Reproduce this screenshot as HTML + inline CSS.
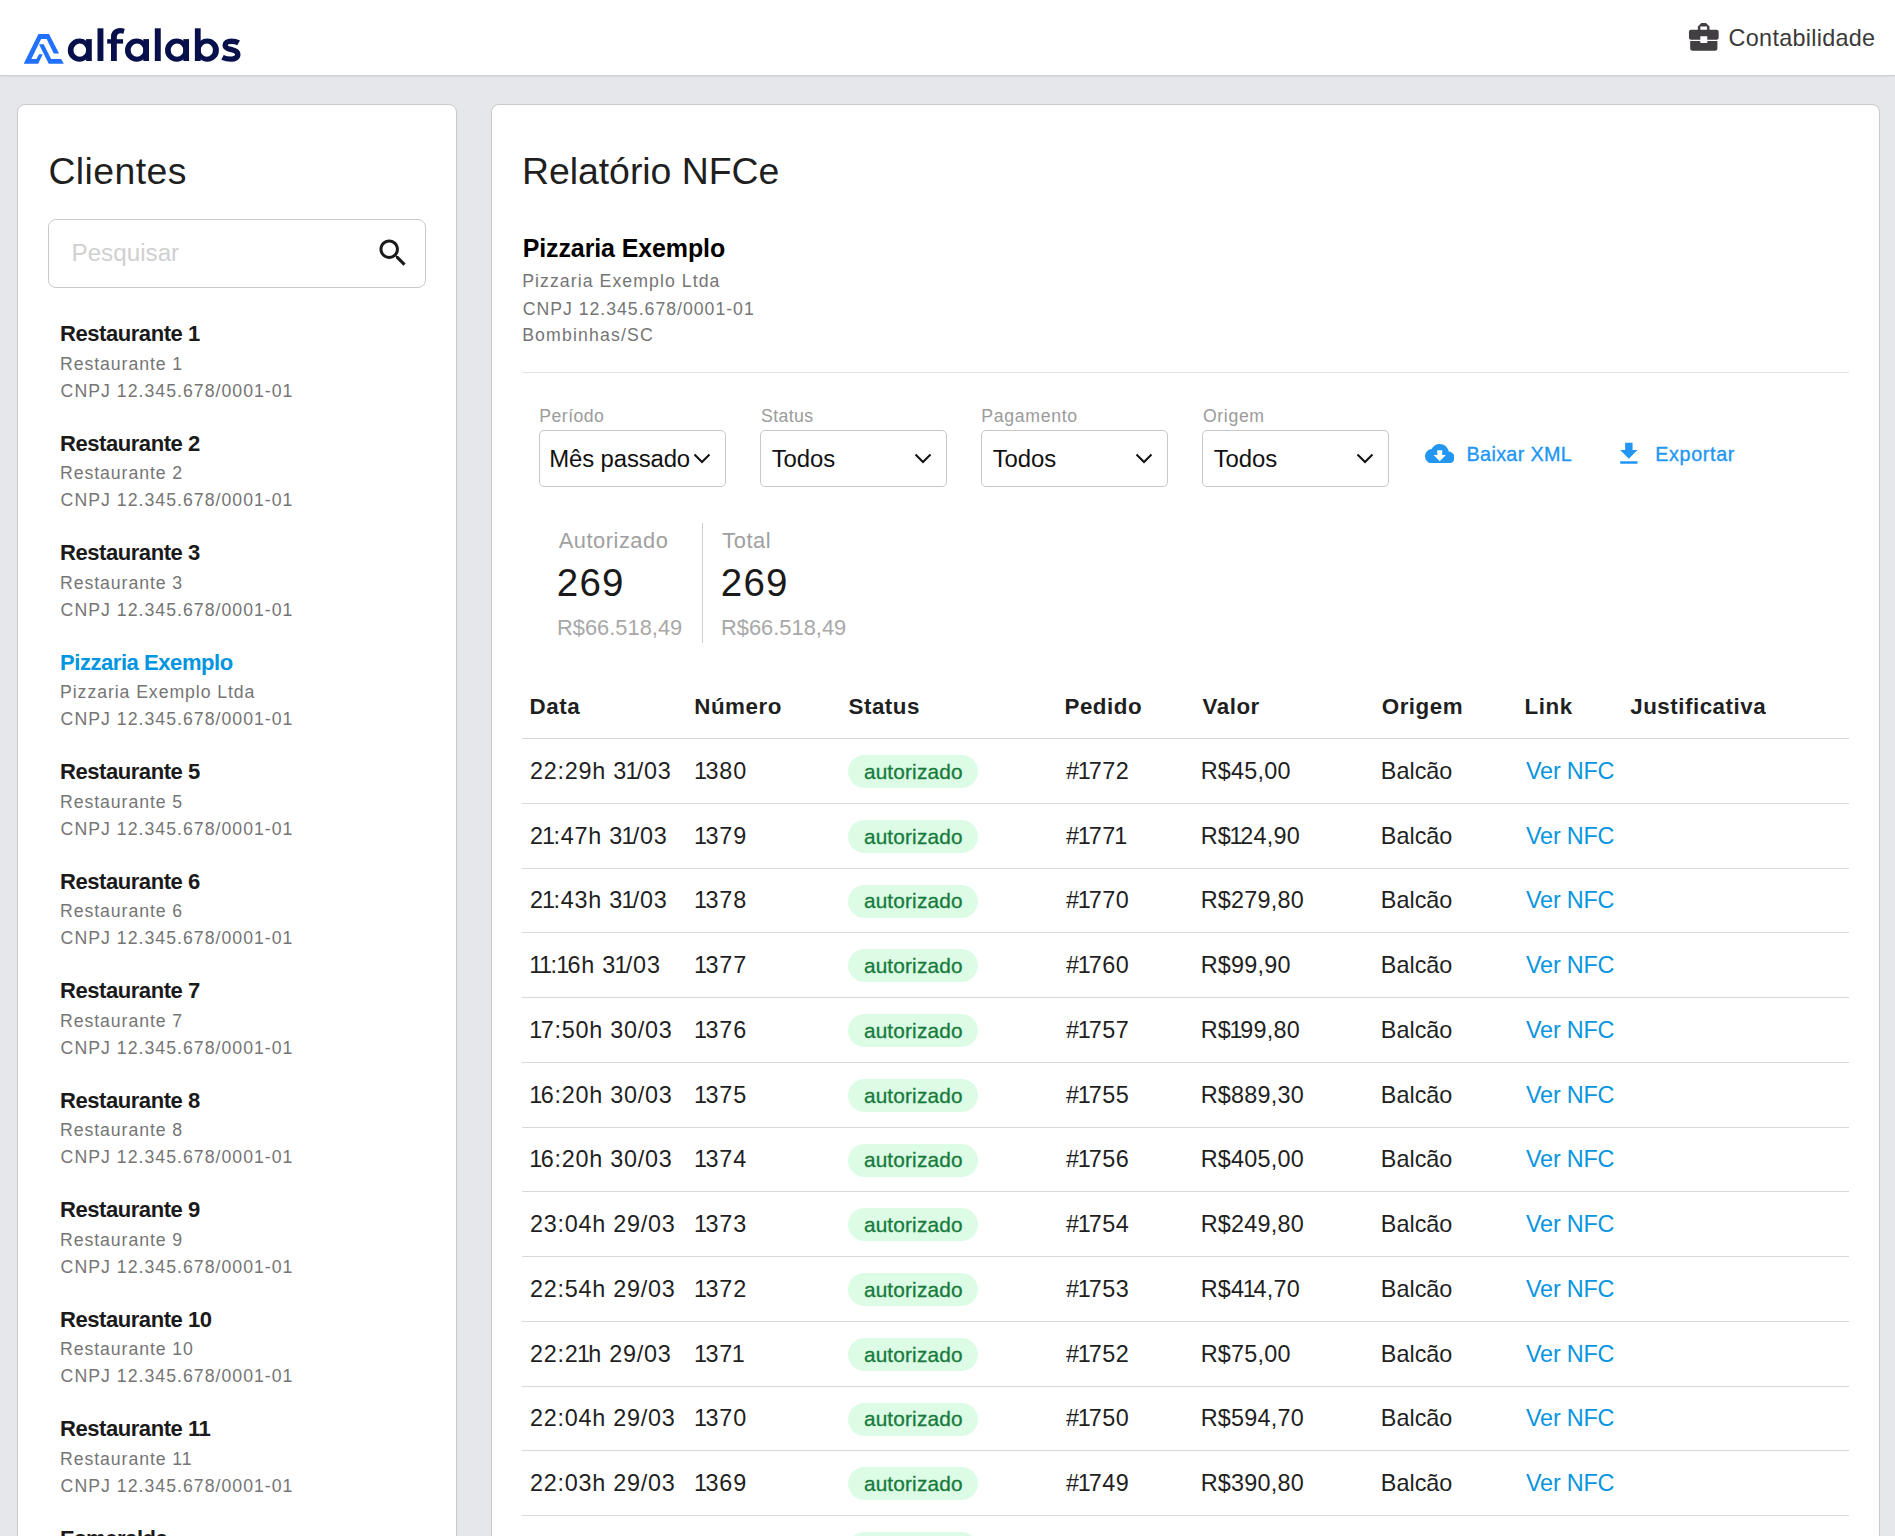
<!DOCTYPE html>
<html><head><meta charset="utf-8"><title>Relatório NFCe</title>
<style>
html,body{margin:0;padding:0;overflow:hidden;}
body{width:1895px;height:1536px;overflow:hidden;background:#e5e7eb;position:relative;font-family:"Liberation Sans", sans-serif;}
.t{position:absolute;white-space:nowrap;}
</style></head><body>
<div style="position:absolute;left:0;top:0;width:1895px;height:75px;background:#fff;border-bottom:1px solid #cdced2;box-shadow:0 1px 2px rgba(0,0,0,0.05)"></div>
<svg style="position:absolute;left:0;top:0" width="70" height="70" viewBox="0 0 70 70">
<path fill="#2170ff" d="M38.47 33.96 L49.02 33.96 L59.05 53.6 L53.77 53.6 L46.65 38.97 L41.1 38.97 L31.35 58.9 L36.36 58.9 L39.0 54.14 L42.69 54.14 L38.2 63.77 L23.7 63.77 Z"/>
<path fill="#2170ff" d="M39.0 44.25 L43.75 44.25 L51.13 58.9 L61.16 58.9 L63.8 63.77 L48.76 63.77 Z"/>
</svg>
<svg style="position:absolute;left:0;top:0" width="250" height="70" viewBox="0 0 250 70"><g fill="#07104a"><path fill-rule="evenodd" d="M67.80 50.15a11.6 11.6 0 1 0 23.20 0a11.6 11.6 0 1 0 -23.20 0ZM73.50 50.20a6.3 6.6 0 1 0 12.60 0a6.3 6.6 0 1 0 -12.60 0Z"/><rect x="86.10" y="39.1" width="5.7" height="21.9"/><path fill-rule="evenodd" d="M125.00 50.15a11.6 11.6 0 1 0 23.20 0a11.6 11.6 0 1 0 -23.20 0ZM130.70 50.20a6.3 6.6 0 1 0 12.60 0a6.3 6.6 0 1 0 -12.60 0Z"/><rect x="143.30" y="39.1" width="5.7" height="21.9"/><path fill-rule="evenodd" d="M165.04 50.15a11.6 11.6 0 1 0 23.20 0a11.6 11.6 0 1 0 -23.20 0ZM170.74 50.20a6.3 6.6 0 1 0 12.60 0a6.3 6.6 0 1 0 -12.60 0Z"/><rect x="183.34" y="39.1" width="5.7" height="21.9"/><rect x="97.5" y="28.3" width="5.9" height="32.7"/><rect x="154.8" y="28.3" width="5.95" height="32.7"/><path fill-rule="evenodd" d="M195.70 50.15a11.6 11.6 0 1 0 23.20 0a11.6 11.6 0 1 0 -23.20 0ZM200.70 50.20a6.1 6.6 0 1 0 12.20 0a6.1 6.6 0 1 0 -12.20 0Z"/><rect x="194.86" y="28.3" width="5.8" height="32.7"/><path d="M111.0 61.0V36.6C111.0 31.4 114.6 27.9 120.0 27.9C121.7 27.9 123.3 28.2 124.7 28.8L123.5 33.8C122.6 33.4 121.6 33.2 120.6 33.2C118.1 33.2 116.8 34.8 116.8 37.6V61.0Z"/><rect x="107.2" y="39.2" width="15.9" height="4.4"/><path fill="none" stroke="#07104a" stroke-width="5.4" d="M238.6 42.9C236.6 41.7 234.0 41.2 231.2 41.2C227.6 41.2 225.1 42.8 225.1 45.2C225.1 47.9 228.1 48.9 231.6 49.7C235.1 50.5 237.8 51.7 237.8 54.6C237.8 57.4 234.9 59.1 231.2 59.1C228.2 59.1 224.9 58.5 222.5 57.3"/></g></svg>
<svg style="position:absolute;left:1684px;top:18px" width="40" height="38" viewBox="0 0 40 38"><g fill="#423f42">
<path d="M13.86 11.9V8.42L17.33 4.95H22.03L25.5 8.42V11.9H23.02V8.42H16.34V11.9Z"/>
<path d="M4.95 13.63A2 2 0 0 1 6.95 11.63H32.65A2 2 0 0 1 34.65 13.63V19.78A2 2 0 0 1 32.65 21.78H23.27V18.3H16.34V21.78H6.95A2 2 0 0 1 4.95 19.78Z"/>
<path d="M6.19 22.99H16.34V25.0H23.27V22.99H33.42V30.17A2.5 2.5 0 0 1 30.92 32.67H8.69A2.5 2.5 0 0 1 6.19 30.17Z"/>
</g></svg>
<div class="t" id="e1" style="left:1728.61px;top:27.08px;font-size:23.4px;line-height:23.4px;color:#3a3a3a;font-weight:400;letter-spacing:0.288px;">Contabilidade</div>
<div style="position:absolute;left:17px;top:104px;width:438px;height:1500px;background:#fff;border:1px solid #cacaca;border-radius:8px"></div>
<div style="position:absolute;left:491px;top:104px;width:1387px;height:1500px;background:#fff;border:1px solid #cacaca;border-radius:8px"></div>
<div class="t" id="e2" style="left:48.40px;top:153.10px;font-size:37.44px;line-height:37.44px;color:#1f1f1f;font-weight:400;letter-spacing:0.402px;">Clientes</div>
<div style="position:absolute;left:48px;top:219px;width:376px;height:67px;border:1px solid #c9c9c9;border-radius:8px;background:#fff"></div>
<div class="t" id="e3" style="left:71.51px;top:241.28px;font-size:24.23px;line-height:24.23px;color:#d0d0d0;font-weight:400;letter-spacing:-0.004px;">Pesquisar</div>
<svg style="position:absolute;left:374.9px;top:235px" width="35.9" height="35.9" viewBox="0 0 24 24"><path fill="#1a1a1a" d="M15.5 14h-.79l-.28-.27C15.41 12.59 16 11.11 16 9.5 16 5.91 13.09 3 9.5 3S3 5.91 3 9.5 5.91 16 9.5 16c1.61 0 3.09-.59 4.23-1.57l.27.28v.79l5 4.99L20.49 19l-4.99-5zm-6 0C7.01 14 5 11.99 5 9.5S7.01 5 9.5 5 14 7.01 14 9.5 11.99 14 9.5 14z"/></svg>
<div class="t" id="e4" style="left:60.02px;top:323.13px;font-size:22.05px;line-height:22.05px;color:#1a1a1a;font-weight:700;letter-spacing:-0.463px;">Restaurante 1</div>
<div class="t" id="e5" style="left:60.05px;top:355.93px;font-size:17.68px;line-height:17.68px;color:#757575;font-weight:400;letter-spacing:0.927px;">Restaurante 1</div>
<div class="t" id="e6" style="left:60.60px;top:382.93px;font-size:17.68px;line-height:17.68px;color:#757575;font-weight:400;letter-spacing:1.026px;">CNPJ 12.345.678/0001-01</div>
<div class="t" id="e7" style="left:60.02px;top:432.63px;font-size:22.05px;line-height:22.05px;color:#1a1a1a;font-weight:700;letter-spacing:-0.463px;">Restaurante 2</div>
<div class="t" id="e8" style="left:60.05px;top:465.43px;font-size:17.68px;line-height:17.68px;color:#757575;font-weight:400;letter-spacing:0.927px;">Restaurante 2</div>
<div class="t" id="e9" style="left:60.60px;top:492.43px;font-size:17.68px;line-height:17.68px;color:#757575;font-weight:400;letter-spacing:1.026px;">CNPJ 12.345.678/0001-01</div>
<div class="t" id="e10" style="left:60.02px;top:542.13px;font-size:22.05px;line-height:22.05px;color:#1a1a1a;font-weight:700;letter-spacing:-0.463px;">Restaurante 3</div>
<div class="t" id="e11" style="left:60.05px;top:574.93px;font-size:17.68px;line-height:17.68px;color:#757575;font-weight:400;letter-spacing:0.927px;">Restaurante 3</div>
<div class="t" id="e12" style="left:60.60px;top:601.93px;font-size:17.68px;line-height:17.68px;color:#757575;font-weight:400;letter-spacing:1.026px;">CNPJ 12.345.678/0001-01</div>
<div class="t" id="e13" style="left:60.02px;top:651.63px;font-size:22.05px;line-height:22.05px;color:#0095e0;font-weight:700;letter-spacing:-0.463px;">Pizzaria Exemplo</div>
<div class="t" id="e14" style="left:60.05px;top:684.43px;font-size:17.68px;line-height:17.68px;color:#757575;font-weight:400;letter-spacing:0.927px;">Pizzaria Exemplo Ltda</div>
<div class="t" id="e15" style="left:60.60px;top:711.43px;font-size:17.68px;line-height:17.68px;color:#757575;font-weight:400;letter-spacing:1.026px;">CNPJ 12.345.678/0001-01</div>
<div class="t" id="e16" style="left:60.02px;top:761.13px;font-size:22.05px;line-height:22.05px;color:#1a1a1a;font-weight:700;letter-spacing:-0.463px;">Restaurante 5</div>
<div class="t" id="e17" style="left:60.05px;top:793.93px;font-size:17.68px;line-height:17.68px;color:#757575;font-weight:400;letter-spacing:0.927px;">Restaurante 5</div>
<div class="t" id="e18" style="left:60.60px;top:820.93px;font-size:17.68px;line-height:17.68px;color:#757575;font-weight:400;letter-spacing:1.026px;">CNPJ 12.345.678/0001-01</div>
<div class="t" id="e19" style="left:60.02px;top:870.63px;font-size:22.05px;line-height:22.05px;color:#1a1a1a;font-weight:700;letter-spacing:-0.463px;">Restaurante 6</div>
<div class="t" id="e20" style="left:60.05px;top:903.43px;font-size:17.68px;line-height:17.68px;color:#757575;font-weight:400;letter-spacing:0.927px;">Restaurante 6</div>
<div class="t" id="e21" style="left:60.60px;top:930.43px;font-size:17.68px;line-height:17.68px;color:#757575;font-weight:400;letter-spacing:1.026px;">CNPJ 12.345.678/0001-01</div>
<div class="t" id="e22" style="left:60.02px;top:980.13px;font-size:22.05px;line-height:22.05px;color:#1a1a1a;font-weight:700;letter-spacing:-0.463px;">Restaurante 7</div>
<div class="t" id="e23" style="left:60.05px;top:1012.93px;font-size:17.68px;line-height:17.68px;color:#757575;font-weight:400;letter-spacing:0.927px;">Restaurante 7</div>
<div class="t" id="e24" style="left:60.60px;top:1039.93px;font-size:17.68px;line-height:17.68px;color:#757575;font-weight:400;letter-spacing:1.026px;">CNPJ 12.345.678/0001-01</div>
<div class="t" id="e25" style="left:60.02px;top:1089.63px;font-size:22.05px;line-height:22.05px;color:#1a1a1a;font-weight:700;letter-spacing:-0.463px;">Restaurante 8</div>
<div class="t" id="e26" style="left:60.05px;top:1122.43px;font-size:17.68px;line-height:17.68px;color:#757575;font-weight:400;letter-spacing:0.927px;">Restaurante 8</div>
<div class="t" id="e27" style="left:60.60px;top:1149.43px;font-size:17.68px;line-height:17.68px;color:#757575;font-weight:400;letter-spacing:1.026px;">CNPJ 12.345.678/0001-01</div>
<div class="t" id="e28" style="left:60.02px;top:1199.13px;font-size:22.05px;line-height:22.05px;color:#1a1a1a;font-weight:700;letter-spacing:-0.463px;">Restaurante 9</div>
<div class="t" id="e29" style="left:60.05px;top:1231.93px;font-size:17.68px;line-height:17.68px;color:#757575;font-weight:400;letter-spacing:0.927px;">Restaurante 9</div>
<div class="t" id="e30" style="left:60.60px;top:1258.93px;font-size:17.68px;line-height:17.68px;color:#757575;font-weight:400;letter-spacing:1.026px;">CNPJ 12.345.678/0001-01</div>
<div class="t" id="e31" style="left:60.02px;top:1308.63px;font-size:22.05px;line-height:22.05px;color:#1a1a1a;font-weight:700;letter-spacing:-0.463px;">Restaurante 10</div>
<div class="t" id="e32" style="left:60.05px;top:1341.43px;font-size:17.68px;line-height:17.68px;color:#757575;font-weight:400;letter-spacing:0.927px;">Restaurante 10</div>
<div class="t" id="e33" style="left:60.60px;top:1368.43px;font-size:17.68px;line-height:17.68px;color:#757575;font-weight:400;letter-spacing:1.026px;">CNPJ 12.345.678/0001-01</div>
<div class="t" id="e34" style="left:60.02px;top:1418.13px;font-size:22.05px;line-height:22.05px;color:#1a1a1a;font-weight:700;letter-spacing:-0.463px;">Restaurante 11</div>
<div class="t" id="e35" style="left:60.05px;top:1450.93px;font-size:17.68px;line-height:17.68px;color:#757575;font-weight:400;letter-spacing:0.927px;">Restaurante 11</div>
<div class="t" id="e36" style="left:60.60px;top:1477.93px;font-size:17.68px;line-height:17.68px;color:#757575;font-weight:400;letter-spacing:1.026px;">CNPJ 12.345.678/0001-01</div>
<div class="t" id="e37" style="left:60.02px;top:1527.63px;font-size:22.05px;line-height:22.05px;color:#1a1a1a;font-weight:700;letter-spacing:-0.463px;">Esmeralda</div>
<div class="t" id="e38" style="left:60.05px;top:1560.43px;font-size:17.68px;line-height:17.68px;color:#757575;font-weight:400;letter-spacing:0.927px;">Esmeralda</div>
<div class="t" id="e39" style="left:60.60px;top:1587.43px;font-size:17.68px;line-height:17.68px;color:#757575;font-weight:400;letter-spacing:1.026px;">CNPJ 12.345.678/0001-01</div>
<div class="t" id="e40" style="left:522.03px;top:153.20px;font-size:37.44px;line-height:37.44px;color:#1f1f1f;font-weight:400;letter-spacing:-0.051px;">Relatório NFCe</div>
<div class="t" id="e41" style="left:522.73px;top:235.86px;font-size:24.96px;line-height:24.96px;color:#000000;font-weight:700;letter-spacing:-0.095px;">Pizzaria Exemplo</div>
<div class="t" id="e42" style="left:522.15px;top:272.73px;font-size:17.68px;line-height:17.68px;color:#757575;font-weight:400;letter-spacing:1.070px;">Pizzaria Exemplo Ltda</div>
<div class="t" id="e43" style="left:522.70px;top:300.53px;font-size:17.68px;line-height:17.68px;color:#757575;font-weight:400;letter-spacing:0.989px;">CNPJ 12.345.678/0001-01</div>
<div class="t" id="e44" style="left:522.15px;top:327.03px;font-size:17.68px;line-height:17.68px;color:#757575;font-weight:400;letter-spacing:1.163px;">Bombinhas/SC</div>
<div style="position:absolute;left:522px;top:372px;width:1327px;height:1px;background:#e3e4e6"></div>
<div class="t" id="e45" style="left:539.35px;top:407.63px;font-size:17.68px;line-height:17.68px;color:#9b9b9b;font-weight:400;letter-spacing:0.439px;">Período</div>
<div style="position:absolute;left:539px;top:430px;width:185px;height:55px;border:1px solid #c8c8c8;border-radius:5px;background:#fff"></div>
<div class="t" id="e46" style="left:549.34px;top:447.04px;font-size:23.92px;line-height:23.92px;color:#111111;font-weight:400;letter-spacing:-0.139px;">Mês passado</div>
<svg style="position:absolute;left:693.0px;top:450px" width="18" height="16" viewBox="0 0 18 16"><path d="M1.5 4.5 L9 12 L16.5 4.5" fill="none" stroke="#111" stroke-width="2"/></svg>
<div class="t" id="e47" style="left:761.00px;top:407.63px;font-size:17.68px;line-height:17.68px;color:#9b9b9b;font-weight:400;letter-spacing:0.387px;">Status</div>
<div style="position:absolute;left:760px;top:430px;width:185px;height:55px;border:1px solid #c8c8c8;border-radius:5px;background:#fff"></div>
<div class="t" id="e48" style="left:771.76px;top:447.04px;font-size:23.92px;line-height:23.92px;color:#111111;font-weight:400;letter-spacing:-0.085px;">Todos</div>
<svg style="position:absolute;left:914.0px;top:450px" width="18" height="16" viewBox="0 0 18 16"><path d="M1.5 4.5 L9 12 L16.5 4.5" fill="none" stroke="#111" stroke-width="2"/></svg>
<div class="t" id="e49" style="left:981.35px;top:407.63px;font-size:17.68px;line-height:17.68px;color:#9b9b9b;font-weight:400;letter-spacing:0.680px;">Pagamento</div>
<div style="position:absolute;left:981px;top:430px;width:185px;height:55px;border:1px solid #c8c8c8;border-radius:5px;background:#fff"></div>
<div class="t" id="e50" style="left:992.76px;top:447.04px;font-size:23.92px;line-height:23.92px;color:#111111;font-weight:400;letter-spacing:-0.085px;">Todos</div>
<svg style="position:absolute;left:1135.0px;top:450px" width="18" height="16" viewBox="0 0 18 16"><path d="M1.5 4.5 L9 12 L16.5 4.5" fill="none" stroke="#111" stroke-width="2"/></svg>
<div class="t" id="e51" style="left:1202.96px;top:407.63px;font-size:17.68px;line-height:17.68px;color:#9b9b9b;font-weight:400;letter-spacing:0.637px;">Origem</div>
<div style="position:absolute;left:1202px;top:430px;width:185px;height:55px;border:1px solid #c8c8c8;border-radius:5px;background:#fff"></div>
<div class="t" id="e52" style="left:1213.76px;top:447.04px;font-size:23.92px;line-height:23.92px;color:#111111;font-weight:400;letter-spacing:-0.085px;">Todos</div>
<svg style="position:absolute;left:1356.0px;top:450px" width="18" height="16" viewBox="0 0 18 16"><path d="M1.5 4.5 L9 12 L16.5 4.5" fill="none" stroke="#111" stroke-width="2"/></svg>
<svg style="position:absolute;left:1424.7px;top:443.7px" width="29.5" height="19.67" viewBox="0 4 24 16"><path fill="#2196f3" d="M19.35 10.04C18.67 6.59 15.64 4 12 4 9.11 4 6.6 5.64 5.35 8.04 2.34 8.36 0 10.91 0 14c0 3.31 2.69 6 6 6h13c2.76 0 5-2.24 5-5 0-2.64-2.05-4.78-4.65-4.96zM17 13l-5 5-5-5h3V9h4v4h3z"/></svg>
<div class="t" id="e53" style="left:1466.58px;top:445.07px;font-size:19.76px;line-height:19.76px;color:#2196f3;font-weight:400;letter-spacing:0.334px;-webkit-text-stroke:0.35px #2196f3;">Baixar XML</div>
<svg style="position:absolute;left:1613.6px;top:438.7px" width="29.66" height="29.66" viewBox="0 0 24 24"><path fill="#2196f3" d="M19 9h-4V3H9v6H5l7 7 7-7zM5 18v2h14v-2H5z"/></svg>
<div class="t" id="e54" style="left:1655.18px;top:445.07px;font-size:19.76px;line-height:19.76px;color:#2196f3;font-weight:400;letter-spacing:0.662px;-webkit-text-stroke:0.35px #2196f3;">Exportar</div>
<div class="t" id="e55" style="left:558.76px;top:529.51px;font-size:21.84px;line-height:21.84px;color:#a0a0a0;font-weight:400;letter-spacing:0.521px;">Autorizado</div>
<div class="t" id="e56" style="left:556.86px;top:564.00px;font-size:38.5px;line-height:38.5px;color:#1a1a1a;font-weight:400;letter-spacing:1.138px;">269</div>
<div class="t" id="e57" style="left:557.01px;top:616.91px;font-size:21.84px;line-height:21.84px;color:#a8a8a8;font-weight:400;letter-spacing:0.023px;">R$66.518,49</div>
<div class="t" id="e58" style="left:722.31px;top:529.51px;font-size:21.84px;line-height:21.84px;color:#a0a0a0;font-weight:400;letter-spacing:0.521px;">Total</div>
<div class="t" id="e59" style="left:720.86px;top:564.00px;font-size:38.5px;line-height:38.5px;color:#1a1a1a;font-weight:400;letter-spacing:1.138px;">269</div>
<div class="t" id="e60" style="left:721.01px;top:616.91px;font-size:21.84px;line-height:21.84px;color:#a8a8a8;font-weight:400;letter-spacing:0.023px;">R$66.518,49</div>
<div style="position:absolute;left:702px;top:523px;width:1px;height:120px;background:#cfcfcf"></div>
<div class="t" id="e61" style="left:529.60px;top:695.97px;font-size:22.36px;line-height:22.36px;color:#1f1f1f;font-weight:700;letter-spacing:0.508px;">Data</div>
<div class="t" id="e62" style="left:694.30px;top:695.97px;font-size:22.36px;line-height:22.36px;color:#1f1f1f;font-weight:700;letter-spacing:0.508px;">Número</div>
<div class="t" id="e63" style="left:848.56px;top:695.97px;font-size:22.36px;line-height:22.36px;color:#1f1f1f;font-weight:700;letter-spacing:0.508px;">Status</div>
<div class="t" id="e64" style="left:1064.50px;top:695.97px;font-size:22.36px;line-height:22.36px;color:#1f1f1f;font-weight:700;letter-spacing:0.508px;">Pedido</div>
<div class="t" id="e65" style="left:1202.55px;top:695.97px;font-size:22.36px;line-height:22.36px;color:#1f1f1f;font-weight:700;letter-spacing:0.508px;">Valor</div>
<div class="t" id="e66" style="left:1381.78px;top:695.97px;font-size:22.36px;line-height:22.36px;color:#1f1f1f;font-weight:700;letter-spacing:0.508px;">Origem</div>
<div class="t" id="e67" style="left:1524.60px;top:695.97px;font-size:22.36px;line-height:22.36px;color:#1f1f1f;font-weight:700;letter-spacing:0.508px;">Link</div>
<div class="t" id="e68" style="left:1630.26px;top:695.97px;font-size:22.36px;line-height:22.36px;color:#1f1f1f;font-weight:700;letter-spacing:0.508px;">Justificativa</div>
<div style="position:absolute;left:522px;top:738px;width:1327px;height:1px;background:#d6d6d6"></div>
<div class="t" id="e69" style="left:529.92px;top:759.88px;font-size:23.4px;line-height:23.4px;color:#1f1f1f;font-weight:400;letter-spacing:0.758px;">22:29h 3<span style="margin-left:-1.60px;letter-spacing:-1.642px">1</span>/03</div>
<div class="t" id="e70" style="left:694.02px;top:759.88px;font-size:23.4px;line-height:23.4px;color:#1f1f1f;font-weight:400;letter-spacing:0.858px;"><span style="margin-left:0.00px;letter-spacing:-1.542px">1</span>380</div>
<div style="position:absolute;left:848px;top:755.00px;width:130px;height:33px;border-radius:17px;background:#dcfce6"></div>
<div class="t" id="e71" style="left:863.92px;top:761.99px;font-size:20.8px;line-height:20.8px;color:#177a3c;font-weight:400;letter-spacing:0.161px;-webkit-text-stroke:0.3px #177a3c;">autorizado</div>
<div class="t" id="e72" style="left:1065.90px;top:759.88px;font-size:23.4px;line-height:23.4px;color:#1f1f1f;font-weight:400;letter-spacing:0.441px;">#<span style="margin-left:-1.60px;letter-spacing:-1.959px">1</span>772</div>
<div class="t" id="e73" style="left:1200.78px;top:759.88px;font-size:23.4px;line-height:23.4px;color:#1f1f1f;font-weight:400;letter-spacing:0.212px;">R$45,00</div>
<div class="t" id="e74" style="left:1380.78px;top:759.88px;font-size:23.4px;line-height:23.4px;color:#1f1f1f;font-weight:400;letter-spacing:0.018px;">Balcão</div>
<div class="t" id="e75" style="left:1526.00px;top:759.88px;font-size:23.4px;line-height:23.4px;color:#0995df;font-weight:400;letter-spacing:-0.214px;">Ver NFC</div>
<div style="position:absolute;left:522px;top:802.75px;width:1327px;height:1px;background:#d9d9d9"></div>
<div class="t" id="e76" style="left:529.92px;top:824.63px;font-size:23.4px;line-height:23.4px;color:#1f1f1f;font-weight:400;letter-spacing:0.758px;">2<span style="margin-left:-1.60px;letter-spacing:-1.642px">1</span>:47h 3<span style="margin-left:-1.60px;letter-spacing:-1.642px">1</span>/03</div>
<div class="t" id="e77" style="left:694.02px;top:824.63px;font-size:23.4px;line-height:23.4px;color:#1f1f1f;font-weight:400;letter-spacing:0.858px;"><span style="margin-left:0.00px;letter-spacing:-1.542px">1</span>379</div>
<div style="position:absolute;left:848px;top:819.75px;width:130px;height:33px;border-radius:17px;background:#dcfce6"></div>
<div class="t" id="e78" style="left:863.92px;top:826.74px;font-size:20.8px;line-height:20.8px;color:#177a3c;font-weight:400;letter-spacing:0.161px;-webkit-text-stroke:0.3px #177a3c;">autorizado</div>
<div class="t" id="e79" style="left:1065.90px;top:824.63px;font-size:23.4px;line-height:23.4px;color:#1f1f1f;font-weight:400;letter-spacing:0.441px;">#<span style="margin-left:-1.60px;letter-spacing:-1.959px">1</span>77<span style="margin-left:-1.60px;letter-spacing:-1.959px">1</span></div>
<div class="t" id="e80" style="left:1200.78px;top:824.63px;font-size:23.4px;line-height:23.4px;color:#1f1f1f;font-weight:400;letter-spacing:0.212px;">R$<span style="margin-left:-1.60px;letter-spacing:-2.188px">1</span>24,90</div>
<div class="t" id="e81" style="left:1380.78px;top:824.63px;font-size:23.4px;line-height:23.4px;color:#1f1f1f;font-weight:400;letter-spacing:0.018px;">Balcão</div>
<div class="t" id="e82" style="left:1526.00px;top:824.63px;font-size:23.4px;line-height:23.4px;color:#0995df;font-weight:400;letter-spacing:-0.214px;">Ver NFC</div>
<div style="position:absolute;left:522px;top:867.50px;width:1327px;height:1px;background:#d9d9d9"></div>
<div class="t" id="e83" style="left:529.92px;top:889.38px;font-size:23.4px;line-height:23.4px;color:#1f1f1f;font-weight:400;letter-spacing:0.758px;">2<span style="margin-left:-1.60px;letter-spacing:-1.642px">1</span>:43h 3<span style="margin-left:-1.60px;letter-spacing:-1.642px">1</span>/03</div>
<div class="t" id="e84" style="left:694.02px;top:889.38px;font-size:23.4px;line-height:23.4px;color:#1f1f1f;font-weight:400;letter-spacing:0.858px;"><span style="margin-left:0.00px;letter-spacing:-1.542px">1</span>378</div>
<div style="position:absolute;left:848px;top:884.50px;width:130px;height:33px;border-radius:17px;background:#dcfce6"></div>
<div class="t" id="e85" style="left:863.92px;top:891.49px;font-size:20.8px;line-height:20.8px;color:#177a3c;font-weight:400;letter-spacing:0.161px;-webkit-text-stroke:0.3px #177a3c;">autorizado</div>
<div class="t" id="e86" style="left:1065.90px;top:889.38px;font-size:23.4px;line-height:23.4px;color:#1f1f1f;font-weight:400;letter-spacing:0.441px;">#<span style="margin-left:-1.60px;letter-spacing:-1.959px">1</span>770</div>
<div class="t" id="e87" style="left:1200.78px;top:889.38px;font-size:23.4px;line-height:23.4px;color:#1f1f1f;font-weight:400;letter-spacing:0.212px;">R$279,80</div>
<div class="t" id="e88" style="left:1380.78px;top:889.38px;font-size:23.4px;line-height:23.4px;color:#1f1f1f;font-weight:400;letter-spacing:0.018px;">Balcão</div>
<div class="t" id="e89" style="left:1526.00px;top:889.38px;font-size:23.4px;line-height:23.4px;color:#0995df;font-weight:400;letter-spacing:-0.214px;">Ver NFC</div>
<div style="position:absolute;left:522px;top:932.25px;width:1327px;height:1px;background:#d9d9d9"></div>
<div class="t" id="e90" style="left:529.32px;top:954.13px;font-size:23.4px;line-height:23.4px;color:#1f1f1f;font-weight:400;letter-spacing:0.758px;"><span style="margin-left:0.00px;letter-spacing:-1.642px">1</span><span style="margin-left:-1.60px;letter-spacing:-1.642px">1</span>:<span style="margin-left:-1.60px;letter-spacing:-1.642px">1</span>6h 3<span style="margin-left:-1.60px;letter-spacing:-1.642px">1</span>/03</div>
<div class="t" id="e91" style="left:694.02px;top:954.13px;font-size:23.4px;line-height:23.4px;color:#1f1f1f;font-weight:400;letter-spacing:0.858px;"><span style="margin-left:0.00px;letter-spacing:-1.542px">1</span>377</div>
<div style="position:absolute;left:848px;top:949.25px;width:130px;height:33px;border-radius:17px;background:#dcfce6"></div>
<div class="t" id="e92" style="left:863.92px;top:956.24px;font-size:20.8px;line-height:20.8px;color:#177a3c;font-weight:400;letter-spacing:0.161px;-webkit-text-stroke:0.3px #177a3c;">autorizado</div>
<div class="t" id="e93" style="left:1065.90px;top:954.13px;font-size:23.4px;line-height:23.4px;color:#1f1f1f;font-weight:400;letter-spacing:0.441px;">#<span style="margin-left:-1.60px;letter-spacing:-1.959px">1</span>760</div>
<div class="t" id="e94" style="left:1200.78px;top:954.13px;font-size:23.4px;line-height:23.4px;color:#1f1f1f;font-weight:400;letter-spacing:0.212px;">R$99,90</div>
<div class="t" id="e95" style="left:1380.78px;top:954.13px;font-size:23.4px;line-height:23.4px;color:#1f1f1f;font-weight:400;letter-spacing:0.018px;">Balcão</div>
<div class="t" id="e96" style="left:1526.00px;top:954.13px;font-size:23.4px;line-height:23.4px;color:#0995df;font-weight:400;letter-spacing:-0.214px;">Ver NFC</div>
<div style="position:absolute;left:522px;top:997.00px;width:1327px;height:1px;background:#d9d9d9"></div>
<div class="t" id="e97" style="left:529.32px;top:1018.88px;font-size:23.4px;line-height:23.4px;color:#1f1f1f;font-weight:400;letter-spacing:0.758px;"><span style="margin-left:0.00px;letter-spacing:-1.642px">1</span>7:50h 30/03</div>
<div class="t" id="e98" style="left:694.02px;top:1018.88px;font-size:23.4px;line-height:23.4px;color:#1f1f1f;font-weight:400;letter-spacing:0.858px;"><span style="margin-left:0.00px;letter-spacing:-1.542px">1</span>376</div>
<div style="position:absolute;left:848px;top:1014.00px;width:130px;height:33px;border-radius:17px;background:#dcfce6"></div>
<div class="t" id="e99" style="left:863.92px;top:1020.99px;font-size:20.8px;line-height:20.8px;color:#177a3c;font-weight:400;letter-spacing:0.161px;-webkit-text-stroke:0.3px #177a3c;">autorizado</div>
<div class="t" id="e100" style="left:1065.90px;top:1018.88px;font-size:23.4px;line-height:23.4px;color:#1f1f1f;font-weight:400;letter-spacing:0.441px;">#<span style="margin-left:-1.60px;letter-spacing:-1.959px">1</span>757</div>
<div class="t" id="e101" style="left:1200.78px;top:1018.88px;font-size:23.4px;line-height:23.4px;color:#1f1f1f;font-weight:400;letter-spacing:0.212px;">R$<span style="margin-left:-1.60px;letter-spacing:-2.188px">1</span>99,80</div>
<div class="t" id="e102" style="left:1380.78px;top:1018.88px;font-size:23.4px;line-height:23.4px;color:#1f1f1f;font-weight:400;letter-spacing:0.018px;">Balcão</div>
<div class="t" id="e103" style="left:1526.00px;top:1018.88px;font-size:23.4px;line-height:23.4px;color:#0995df;font-weight:400;letter-spacing:-0.214px;">Ver NFC</div>
<div style="position:absolute;left:522px;top:1061.75px;width:1327px;height:1px;background:#d9d9d9"></div>
<div class="t" id="e104" style="left:529.32px;top:1083.63px;font-size:23.4px;line-height:23.4px;color:#1f1f1f;font-weight:400;letter-spacing:0.758px;"><span style="margin-left:0.00px;letter-spacing:-1.642px">1</span>6:20h 30/03</div>
<div class="t" id="e105" style="left:694.02px;top:1083.63px;font-size:23.4px;line-height:23.4px;color:#1f1f1f;font-weight:400;letter-spacing:0.858px;"><span style="margin-left:0.00px;letter-spacing:-1.542px">1</span>375</div>
<div style="position:absolute;left:848px;top:1078.75px;width:130px;height:33px;border-radius:17px;background:#dcfce6"></div>
<div class="t" id="e106" style="left:863.92px;top:1085.74px;font-size:20.8px;line-height:20.8px;color:#177a3c;font-weight:400;letter-spacing:0.161px;-webkit-text-stroke:0.3px #177a3c;">autorizado</div>
<div class="t" id="e107" style="left:1065.90px;top:1083.63px;font-size:23.4px;line-height:23.4px;color:#1f1f1f;font-weight:400;letter-spacing:0.441px;">#<span style="margin-left:-1.60px;letter-spacing:-1.959px">1</span>755</div>
<div class="t" id="e108" style="left:1200.78px;top:1083.63px;font-size:23.4px;line-height:23.4px;color:#1f1f1f;font-weight:400;letter-spacing:0.212px;">R$889,30</div>
<div class="t" id="e109" style="left:1380.78px;top:1083.63px;font-size:23.4px;line-height:23.4px;color:#1f1f1f;font-weight:400;letter-spacing:0.018px;">Balcão</div>
<div class="t" id="e110" style="left:1526.00px;top:1083.63px;font-size:23.4px;line-height:23.4px;color:#0995df;font-weight:400;letter-spacing:-0.214px;">Ver NFC</div>
<div style="position:absolute;left:522px;top:1126.50px;width:1327px;height:1px;background:#d9d9d9"></div>
<div class="t" id="e111" style="left:529.32px;top:1148.38px;font-size:23.4px;line-height:23.4px;color:#1f1f1f;font-weight:400;letter-spacing:0.758px;"><span style="margin-left:0.00px;letter-spacing:-1.642px">1</span>6:20h 30/03</div>
<div class="t" id="e112" style="left:694.02px;top:1148.38px;font-size:23.4px;line-height:23.4px;color:#1f1f1f;font-weight:400;letter-spacing:0.858px;"><span style="margin-left:0.00px;letter-spacing:-1.542px">1</span>374</div>
<div style="position:absolute;left:848px;top:1143.50px;width:130px;height:33px;border-radius:17px;background:#dcfce6"></div>
<div class="t" id="e113" style="left:863.92px;top:1150.49px;font-size:20.8px;line-height:20.8px;color:#177a3c;font-weight:400;letter-spacing:0.161px;-webkit-text-stroke:0.3px #177a3c;">autorizado</div>
<div class="t" id="e114" style="left:1065.90px;top:1148.38px;font-size:23.4px;line-height:23.4px;color:#1f1f1f;font-weight:400;letter-spacing:0.441px;">#<span style="margin-left:-1.60px;letter-spacing:-1.959px">1</span>756</div>
<div class="t" id="e115" style="left:1200.78px;top:1148.38px;font-size:23.4px;line-height:23.4px;color:#1f1f1f;font-weight:400;letter-spacing:0.212px;">R$405,00</div>
<div class="t" id="e116" style="left:1380.78px;top:1148.38px;font-size:23.4px;line-height:23.4px;color:#1f1f1f;font-weight:400;letter-spacing:0.018px;">Balcão</div>
<div class="t" id="e117" style="left:1526.00px;top:1148.38px;font-size:23.4px;line-height:23.4px;color:#0995df;font-weight:400;letter-spacing:-0.214px;">Ver NFC</div>
<div style="position:absolute;left:522px;top:1191.25px;width:1327px;height:1px;background:#d9d9d9"></div>
<div class="t" id="e118" style="left:529.92px;top:1213.13px;font-size:23.4px;line-height:23.4px;color:#1f1f1f;font-weight:400;letter-spacing:0.758px;">23:04h 29/03</div>
<div class="t" id="e119" style="left:694.02px;top:1213.13px;font-size:23.4px;line-height:23.4px;color:#1f1f1f;font-weight:400;letter-spacing:0.858px;"><span style="margin-left:0.00px;letter-spacing:-1.542px">1</span>373</div>
<div style="position:absolute;left:848px;top:1208.25px;width:130px;height:33px;border-radius:17px;background:#dcfce6"></div>
<div class="t" id="e120" style="left:863.92px;top:1215.24px;font-size:20.8px;line-height:20.8px;color:#177a3c;font-weight:400;letter-spacing:0.161px;-webkit-text-stroke:0.3px #177a3c;">autorizado</div>
<div class="t" id="e121" style="left:1065.90px;top:1213.13px;font-size:23.4px;line-height:23.4px;color:#1f1f1f;font-weight:400;letter-spacing:0.441px;">#<span style="margin-left:-1.60px;letter-spacing:-1.959px">1</span>754</div>
<div class="t" id="e122" style="left:1200.78px;top:1213.13px;font-size:23.4px;line-height:23.4px;color:#1f1f1f;font-weight:400;letter-spacing:0.212px;">R$249,80</div>
<div class="t" id="e123" style="left:1380.78px;top:1213.13px;font-size:23.4px;line-height:23.4px;color:#1f1f1f;font-weight:400;letter-spacing:0.018px;">Balcão</div>
<div class="t" id="e124" style="left:1526.00px;top:1213.13px;font-size:23.4px;line-height:23.4px;color:#0995df;font-weight:400;letter-spacing:-0.214px;">Ver NFC</div>
<div style="position:absolute;left:522px;top:1256.00px;width:1327px;height:1px;background:#d9d9d9"></div>
<div class="t" id="e125" style="left:529.92px;top:1277.88px;font-size:23.4px;line-height:23.4px;color:#1f1f1f;font-weight:400;letter-spacing:0.758px;">22:54h 29/03</div>
<div class="t" id="e126" style="left:694.02px;top:1277.88px;font-size:23.4px;line-height:23.4px;color:#1f1f1f;font-weight:400;letter-spacing:0.858px;"><span style="margin-left:0.00px;letter-spacing:-1.542px">1</span>372</div>
<div style="position:absolute;left:848px;top:1273.00px;width:130px;height:33px;border-radius:17px;background:#dcfce6"></div>
<div class="t" id="e127" style="left:863.92px;top:1279.99px;font-size:20.8px;line-height:20.8px;color:#177a3c;font-weight:400;letter-spacing:0.161px;-webkit-text-stroke:0.3px #177a3c;">autorizado</div>
<div class="t" id="e128" style="left:1065.90px;top:1277.88px;font-size:23.4px;line-height:23.4px;color:#1f1f1f;font-weight:400;letter-spacing:0.441px;">#<span style="margin-left:-1.60px;letter-spacing:-1.959px">1</span>753</div>
<div class="t" id="e129" style="left:1200.78px;top:1277.88px;font-size:23.4px;line-height:23.4px;color:#1f1f1f;font-weight:400;letter-spacing:0.212px;">R$4<span style="margin-left:-1.60px;letter-spacing:-2.188px">1</span>4,70</div>
<div class="t" id="e130" style="left:1380.78px;top:1277.88px;font-size:23.4px;line-height:23.4px;color:#1f1f1f;font-weight:400;letter-spacing:0.018px;">Balcão</div>
<div class="t" id="e131" style="left:1526.00px;top:1277.88px;font-size:23.4px;line-height:23.4px;color:#0995df;font-weight:400;letter-spacing:-0.214px;">Ver NFC</div>
<div style="position:absolute;left:522px;top:1320.75px;width:1327px;height:1px;background:#d9d9d9"></div>
<div class="t" id="e132" style="left:529.92px;top:1342.63px;font-size:23.4px;line-height:23.4px;color:#1f1f1f;font-weight:400;letter-spacing:0.758px;">22:2<span style="margin-left:-1.60px;letter-spacing:-1.642px">1</span>h 29/03</div>
<div class="t" id="e133" style="left:694.02px;top:1342.63px;font-size:23.4px;line-height:23.4px;color:#1f1f1f;font-weight:400;letter-spacing:0.858px;"><span style="margin-left:0.00px;letter-spacing:-1.542px">1</span>37<span style="margin-left:-1.60px;letter-spacing:-1.542px">1</span></div>
<div style="position:absolute;left:848px;top:1337.75px;width:130px;height:33px;border-radius:17px;background:#dcfce6"></div>
<div class="t" id="e134" style="left:863.92px;top:1344.74px;font-size:20.8px;line-height:20.8px;color:#177a3c;font-weight:400;letter-spacing:0.161px;-webkit-text-stroke:0.3px #177a3c;">autorizado</div>
<div class="t" id="e135" style="left:1065.90px;top:1342.63px;font-size:23.4px;line-height:23.4px;color:#1f1f1f;font-weight:400;letter-spacing:0.441px;">#<span style="margin-left:-1.60px;letter-spacing:-1.959px">1</span>752</div>
<div class="t" id="e136" style="left:1200.78px;top:1342.63px;font-size:23.4px;line-height:23.4px;color:#1f1f1f;font-weight:400;letter-spacing:0.212px;">R$75,00</div>
<div class="t" id="e137" style="left:1380.78px;top:1342.63px;font-size:23.4px;line-height:23.4px;color:#1f1f1f;font-weight:400;letter-spacing:0.018px;">Balcão</div>
<div class="t" id="e138" style="left:1526.00px;top:1342.63px;font-size:23.4px;line-height:23.4px;color:#0995df;font-weight:400;letter-spacing:-0.214px;">Ver NFC</div>
<div style="position:absolute;left:522px;top:1385.50px;width:1327px;height:1px;background:#d9d9d9"></div>
<div class="t" id="e139" style="left:529.92px;top:1407.38px;font-size:23.4px;line-height:23.4px;color:#1f1f1f;font-weight:400;letter-spacing:0.758px;">22:04h 29/03</div>
<div class="t" id="e140" style="left:694.02px;top:1407.38px;font-size:23.4px;line-height:23.4px;color:#1f1f1f;font-weight:400;letter-spacing:0.858px;"><span style="margin-left:0.00px;letter-spacing:-1.542px">1</span>370</div>
<div style="position:absolute;left:848px;top:1402.50px;width:130px;height:33px;border-radius:17px;background:#dcfce6"></div>
<div class="t" id="e141" style="left:863.92px;top:1409.49px;font-size:20.8px;line-height:20.8px;color:#177a3c;font-weight:400;letter-spacing:0.161px;-webkit-text-stroke:0.3px #177a3c;">autorizado</div>
<div class="t" id="e142" style="left:1065.90px;top:1407.38px;font-size:23.4px;line-height:23.4px;color:#1f1f1f;font-weight:400;letter-spacing:0.441px;">#<span style="margin-left:-1.60px;letter-spacing:-1.959px">1</span>750</div>
<div class="t" id="e143" style="left:1200.78px;top:1407.38px;font-size:23.4px;line-height:23.4px;color:#1f1f1f;font-weight:400;letter-spacing:0.212px;">R$594,70</div>
<div class="t" id="e144" style="left:1380.78px;top:1407.38px;font-size:23.4px;line-height:23.4px;color:#1f1f1f;font-weight:400;letter-spacing:0.018px;">Balcão</div>
<div class="t" id="e145" style="left:1526.00px;top:1407.38px;font-size:23.4px;line-height:23.4px;color:#0995df;font-weight:400;letter-spacing:-0.214px;">Ver NFC</div>
<div style="position:absolute;left:522px;top:1450.25px;width:1327px;height:1px;background:#d9d9d9"></div>
<div class="t" id="e146" style="left:529.92px;top:1472.13px;font-size:23.4px;line-height:23.4px;color:#1f1f1f;font-weight:400;letter-spacing:0.758px;">22:03h 29/03</div>
<div class="t" id="e147" style="left:694.02px;top:1472.13px;font-size:23.4px;line-height:23.4px;color:#1f1f1f;font-weight:400;letter-spacing:0.858px;"><span style="margin-left:0.00px;letter-spacing:-1.542px">1</span>369</div>
<div style="position:absolute;left:848px;top:1467.25px;width:130px;height:33px;border-radius:17px;background:#dcfce6"></div>
<div class="t" id="e148" style="left:863.92px;top:1474.24px;font-size:20.8px;line-height:20.8px;color:#177a3c;font-weight:400;letter-spacing:0.161px;-webkit-text-stroke:0.3px #177a3c;">autorizado</div>
<div class="t" id="e149" style="left:1065.90px;top:1472.13px;font-size:23.4px;line-height:23.4px;color:#1f1f1f;font-weight:400;letter-spacing:0.441px;">#<span style="margin-left:-1.60px;letter-spacing:-1.959px">1</span>749</div>
<div class="t" id="e150" style="left:1200.78px;top:1472.13px;font-size:23.4px;line-height:23.4px;color:#1f1f1f;font-weight:400;letter-spacing:0.212px;">R$390,80</div>
<div class="t" id="e151" style="left:1380.78px;top:1472.13px;font-size:23.4px;line-height:23.4px;color:#1f1f1f;font-weight:400;letter-spacing:0.018px;">Balcão</div>
<div class="t" id="e152" style="left:1526.00px;top:1472.13px;font-size:23.4px;line-height:23.4px;color:#0995df;font-weight:400;letter-spacing:-0.214px;">Ver NFC</div>
<div style="position:absolute;left:522px;top:1515.00px;width:1327px;height:1px;background:#d9d9d9"></div>
<div class="t" id="e153" style="left:529.92px;top:1536.88px;font-size:23.4px;line-height:23.4px;color:#1f1f1f;font-weight:400;letter-spacing:0.758px;">22:0<span style="margin-left:-1.60px;letter-spacing:-1.642px">1</span>h 29/03</div>
<div class="t" id="e154" style="left:694.02px;top:1536.88px;font-size:23.4px;line-height:23.4px;color:#1f1f1f;font-weight:400;letter-spacing:0.858px;"><span style="margin-left:0.00px;letter-spacing:-1.542px">1</span>368</div>
<div style="position:absolute;left:848px;top:1532.00px;width:130px;height:33px;border-radius:17px;background:#dcfce6"></div>
<div class="t" id="e155" style="left:863.92px;top:1538.99px;font-size:20.8px;line-height:20.8px;color:#177a3c;font-weight:400;letter-spacing:0.161px;-webkit-text-stroke:0.3px #177a3c;">autorizado</div>
<div class="t" id="e156" style="left:1065.90px;top:1536.88px;font-size:23.4px;line-height:23.4px;color:#1f1f1f;font-weight:400;letter-spacing:0.441px;">#<span style="margin-left:-1.60px;letter-spacing:-1.959px">1</span>748</div>
<div class="t" id="e157" style="left:1200.78px;top:1536.88px;font-size:23.4px;line-height:23.4px;color:#1f1f1f;font-weight:400;letter-spacing:0.212px;">R$<span style="margin-left:-1.60px;letter-spacing:-2.188px">1</span>20,00</div>
<div class="t" id="e158" style="left:1380.78px;top:1536.88px;font-size:23.4px;line-height:23.4px;color:#1f1f1f;font-weight:400;letter-spacing:0.018px;">Balcão</div>
<div class="t" id="e159" style="left:1526.00px;top:1536.88px;font-size:23.4px;line-height:23.4px;color:#0995df;font-weight:400;letter-spacing:-0.214px;">Ver NFC</div>
<div style="position:absolute;left:522px;top:1579.75px;width:1327px;height:1px;background:#d9d9d9"></div>
</body></html>
